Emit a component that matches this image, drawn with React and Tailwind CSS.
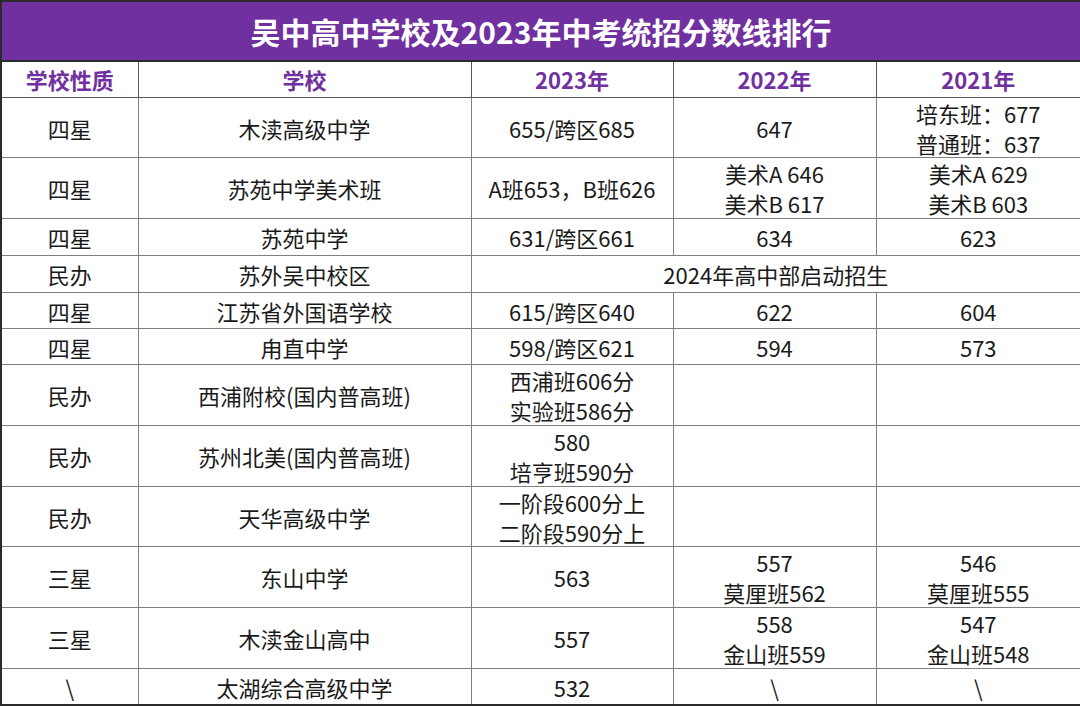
const rows = [
  { h: "h-[59px]", cells: ["四星", "木渎高级中学", "655/跨区685", "647", ["培东班：677", "普通班：637"]] },
  { h: "h-[60px]", cells: ["四星", "苏苑中学美术班", "A班653，B班626", ["美术A 646", "美术B 617"], ["美术A 629", "美术B 603"]] },
  { h: "h-[36px]", cells: ["四星", "苏苑中学", "631/跨区661", "634", "623"] },
  { h: "h-[36px]", span: true, cells: ["民办", "苏外吴中校区", "2024年高中部启动招生"] },
  { h: "h-[35px]", cells: ["四星", "江苏省外国语学校", "615/跨区640", "622", "604"] },
  { h: "h-[35px]", cells: ["四星", "甪直中学", "598/跨区621", "594", "573"] },
  { h: "h-[60px]", cells: ["民办", "西浦附校(国内普高班)", ["西浦班606分", "实验班586分"], "", ""] },
  { h: "h-[60px]", cells: ["民办", "苏州北美(国内普高班)", ["580", "培亨班590分"], "", ""] },
  { h: "h-[59px]", cells: ["民办", "天华高级中学", ["一阶段600分上", "二阶段590分上"], "", ""] },
  { h: "h-[60px]", cells: ["三星", "东山中学", "563", ["557", "莫厘班562"], ["546", "莫厘班555"]] },
  { h: "h-[60px]", cells: ["三星", "木渎金山高中", "557", ["558", "金山班559"], ["547", "金山班548"]] },
  { h: "h-[35px]", cells: ["\\", "太湖综合高级中学", "532", "\\", "\\"] },
];

function Cell({ value, span, h }) {
  return (
    <td colSpan={span ? 3 : undefined} className="border border-[#7f7f7f] p-0">
      <div className={`${h} flex flex-col items-center justify-center text-center leading-[30px]`}>
        {Array.isArray(value) ? value.map((v) => <div key={v}>{v}</div>) : value}
      </div>
    </td>
  );
}

export default function App() {
  return (
    <div
      className="h-[706px] w-[1080px] overflow-hidden bg-white text-[22px] text-[#1a1a1a]"
      style={{ fontFamily: '"Noto Sans CJK SC", "Noto Sans", sans-serif' }}
    >
      <table className="w-[1080px] table-fixed border-collapse border-2 border-[#2b2b2b]">
        <colgroup>
          <col className="w-[137px]" />
          <col className="w-[333px]" />
          <col className="w-[202px]" />
          <col className="w-[203px]" />
          <col className="w-[205px]" />
        </colgroup>
        <thead>
          <tr>
            <th colSpan={5} className="border-2 border-[#2b2b2b] bg-[#7030a0] p-0">
              <div className="flex h-[58px] items-center justify-center text-[30px] font-bold text-white">
                吴中高中学校及2023年中考统招分数线排行
              </div>
            </th>
          </tr>
          <tr className="font-bold text-[#7030a0]">
            {["学校性质", "学校", "2023年", "2022年", "2021年"].map((t) => (
              <th key={t} className="border border-[#5a5a5a] p-0">
                <div className="flex h-[35px] items-center justify-center">{t}</div>
              </th>
            ))}
          </tr>
        </thead>
        <tbody>
          {rows.map((r, i) => (
            <tr key={i}>
              {r.cells.map((c, j) => (
                <Cell key={j} value={c} h={r.h} span={r.span && j === 2} />
              ))}
            </tr>
          ))}
        </tbody>
      </table>
    </div>
  );
}
